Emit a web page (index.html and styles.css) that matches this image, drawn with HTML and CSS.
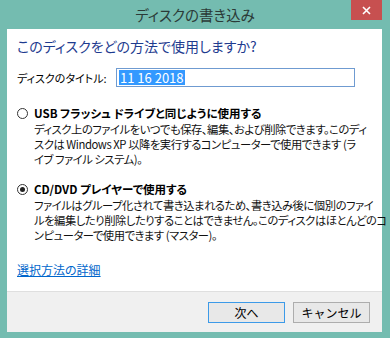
FILE: index.html
```html
<!DOCTYPE html>
<html lang="ja">
<head>
  <meta charset="UTF-8">
  <title>ディスクの書き込み</title>
  <link rel="stylesheet" href="styles.css">
</head>
<body>
  <div class="window">
    <div class="titlebar">
      <span class="title">ディスクの書き込み</span>
      <button class="close" aria-label="閉じる">
        <svg width="9" height="9" viewBox="0 0 9 9"><path d="M1 1L8 8M8 1L1 8" stroke="#fff" stroke-width="1.6"/></svg>
      </button>
    </div>

    <div class="client">
      <div class="main">
        <h1 class="instruction">このディスクをどの方法で使用しますか?</h1>

        <div class="title-row">
          <label class="label">ディスクのタイトル:</label>
          <div class="textbox"><span class="selected">11 16 2018</span></div>
        </div>

        <div class="option">
          <span class="radio"></span>
          <div class="option-body">
            <div class="option-title">USB フラッシュ ドライブと同じように使用する</div>
            <p class="option-desc">ディスク上のファイルをいつでも保存、編集、および削除できます。このディ<br>スクは Windows XP 以降を実行するコンピューターで使用できます (ラ<br>イブ ファイル システム)。</p>
          </div>
        </div>

        <div class="option">
          <span class="radio checked"></span>
          <div class="option-body">
            <div class="option-title">CD/DVD プレイヤーで使用する</div>
            <p class="option-desc">ファイルはグループ化されて書き込まれるため、書き込み後に個別のファイ<br>ルを編集したり削除したりすることはできません。このディスクはほとんどのコ<br>ンピューターで使用できます (マスター)。</p>
          </div>
        </div>

        <a class="more" href="#">選択方法の詳細</a>
      </div>

      <div class="footer">
        <button class="btn default">次へ</button>
        <button class="btn">キャンセル</button>
      </div>
    </div>
  </div>
</body>
</html>
```

FILE: styles.css
```css
body {
  margin: 0;
  font-family: "Noto Sans CJK JP", "Noto Sans", sans-serif;
  font-feature-settings: "palt";
  background-color: #74bcb0;
}

.window {
  width: 390px;
  height: 338px;
  display: flex;
  flex-direction: column;
  background-color: #74bcb0;
}

.titlebar {
  height: 29px;
  display: grid;
  grid-template-columns: 1fr auto 1fr;
  align-items: start;
}

.title {
  grid-column: 2;
  font-size: 14.5px;
  line-height: 30px;
  color: #2b3a37;
}

.close {
  grid-column: 3;
  justify-self: end;
  margin-right: 8px;
  width: 31px;
  height: 20px;
  border: none;
  padding: 0;
  background-color: #c75050;
  display: flex;
  align-items: center;
  justify-content: center;
}

.client {
  flex-grow: 1;
  margin: 0 8px 6px 7px;
  display: flex;
  flex-direction: column;
  background-color: #fff;
}

.main {
  flex-grow: 1;
  padding: 7px 10px 0 10px;
}

.instruction {
  margin: 0;
  font-size: 14px;
  font-weight: normal;
  line-height: 20px;
  color: #1e3b8f;
}

.title-row {
  display: flex;
  align-items: center;
  margin-top: 12px;
  font-size: 11px;
  color: #000;
}

.label {
  width: 99px;
}

.textbox {
  width: 233px;
  height: 17px;
  border: 1px solid #6f9bd1;
  padding: 0 2px;
  display: flex;
  align-items: center;
}

.selected {
  background-color: #3399ff;
  color: #fff;
  font-size: 13px;
  line-height: 15px;
  padding: 0 1px;
}

.option {
  display: flex;
  gap: 6px;
  margin-top: 18px;
  color: #000;
}

.option + .option {
  margin-top: 14px;
}

.radio {
  width: 11px;
  height: 11px;
  border: 1px solid #333;
  border-radius: 50%;
  margin-top: 3px;
  flex-shrink: 0;
  box-sizing: border-box;
  display: flex;
  align-items: center;
  justify-content: center;
}

.radio.checked::after {
  content: "";
  width: 5px;
  height: 5px;
  border-radius: 50%;
  background-color: #222;
}

.option-title {
  font-size: 11.5px;
  font-weight: bold;
  line-height: 17px;
}

.option-desc {
  margin: 0;
  font-size: 11.3px;
  letter-spacing: -0.45px;
  line-height: 15px;
  white-space: nowrap;
  color: #111;
}

.more {
  display: inline-block;
  margin-top: 18px;
  font-size: 12px;
  color: #0066cc;
}

.footer {
  height: 40px;
  border-top: 1px solid #dfdfdf;
  background-color: #f0f0f0;
  display: flex;
  justify-content: flex-end;
  align-items: center;
  gap: 8px;
  padding-right: 12px;
}

.btn {
  width: 77px;
  height: 21px;
  padding: 0;
  border: 1px solid #adadad;
  background-color: #e8e8e8;
  font-family: inherit;
  font-size: 12px;
  color: #000;
}

.btn.default {
  border-color: #3c9ae8;
}
```
